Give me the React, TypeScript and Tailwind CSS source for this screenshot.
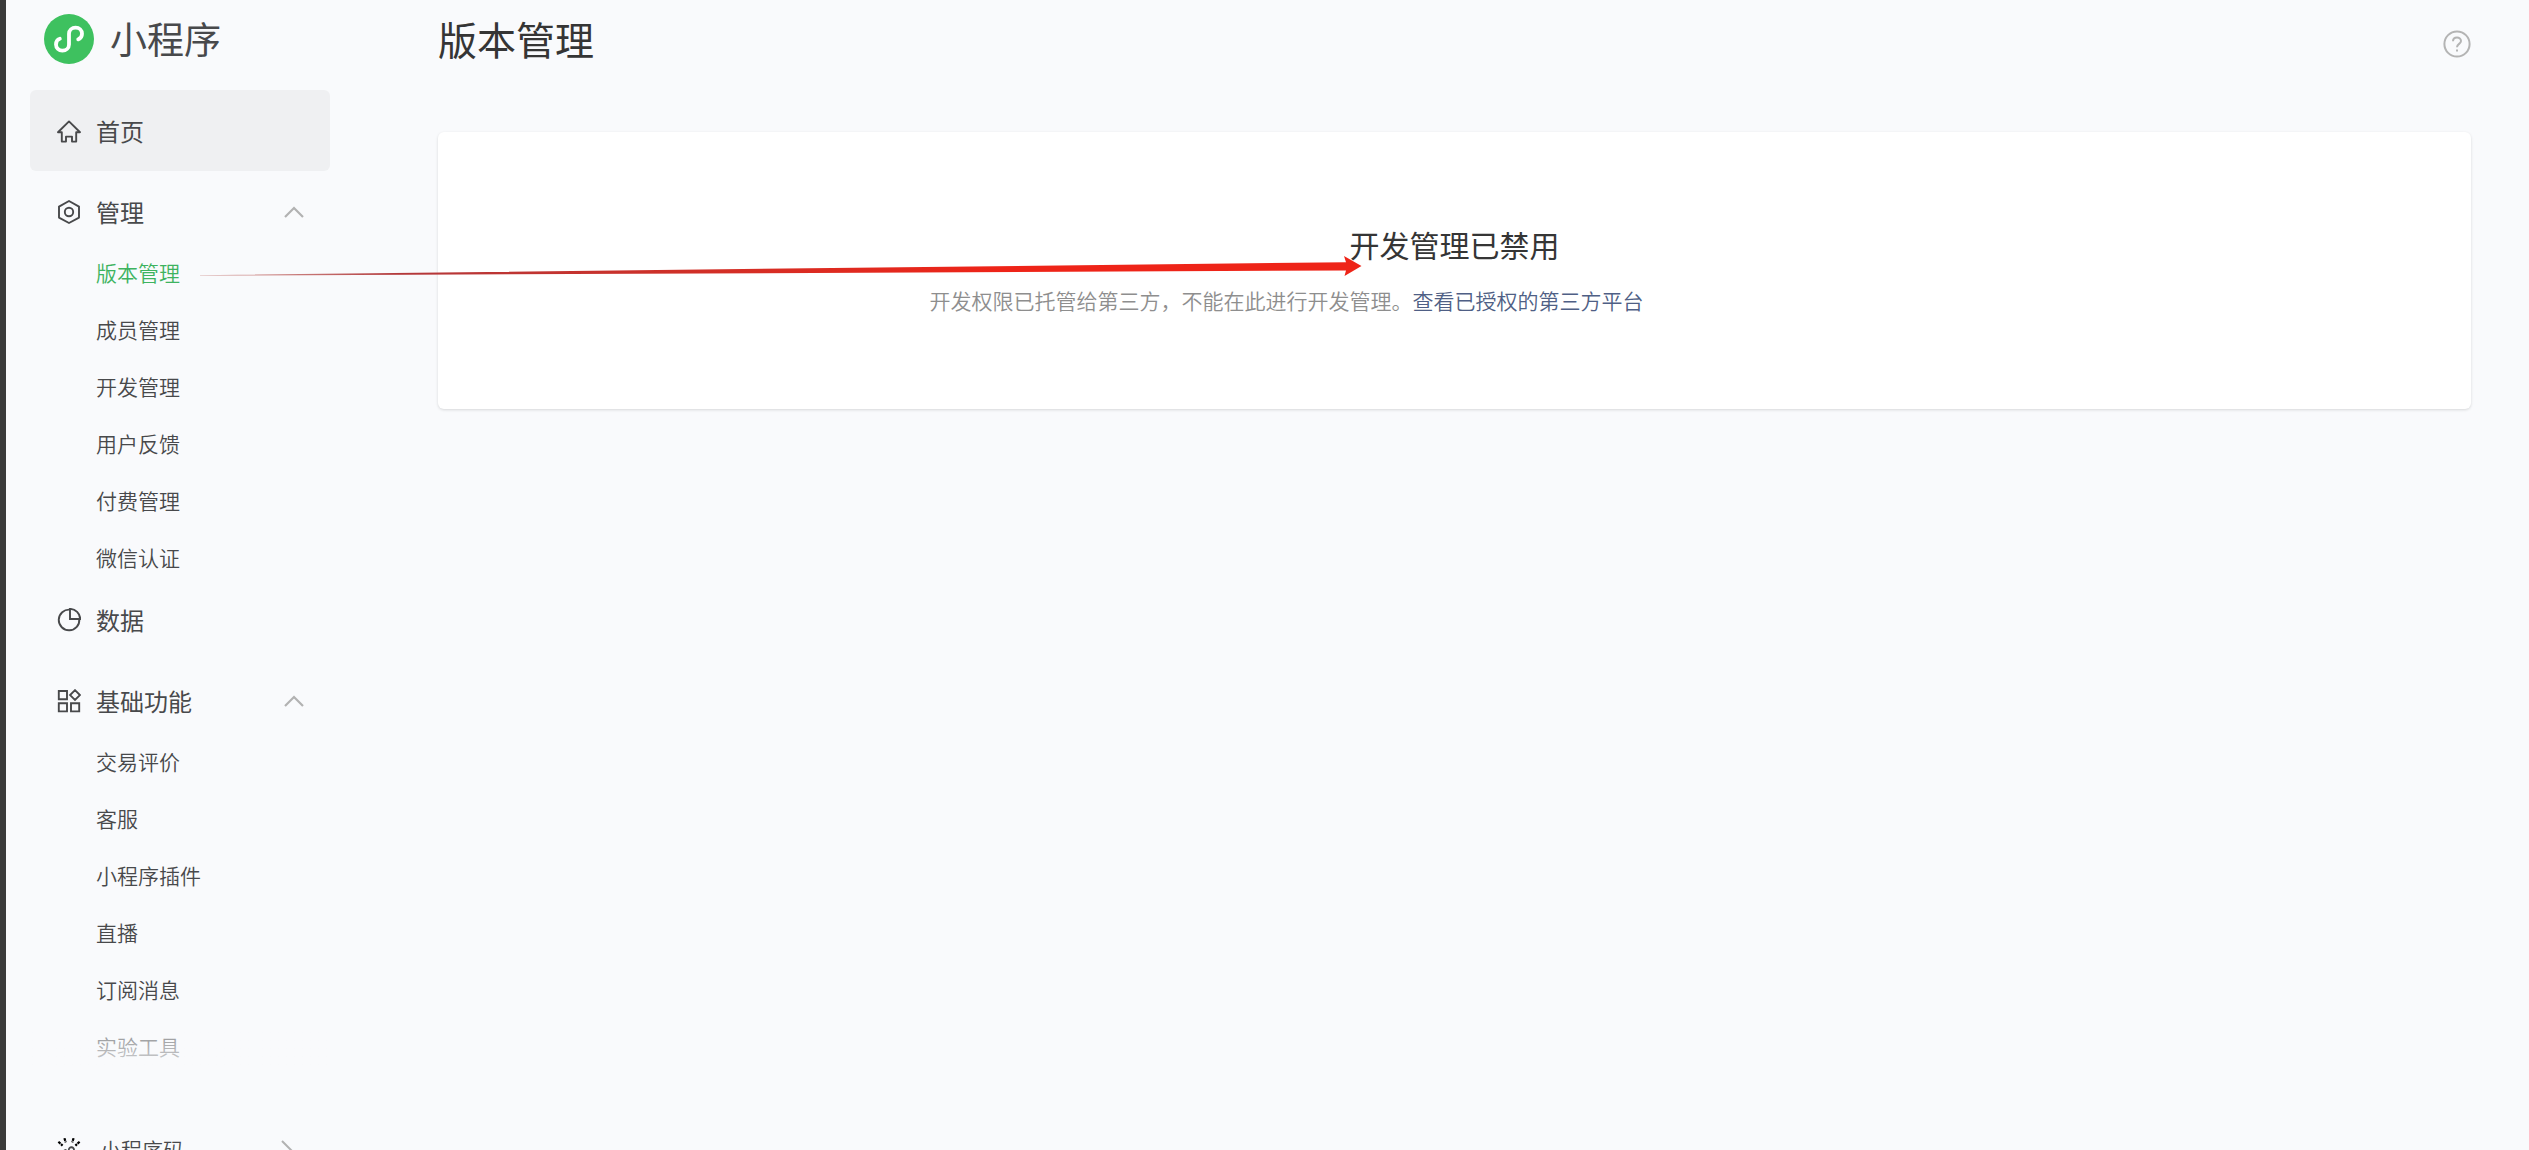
import React, { useState } from 'react';

interface MenuGroup {
  id: string;
  name: string;
  icon: React.ReactNode;
  children?: string[];
}

const iconClass = "w-6 h-6 shrink-0";

const HomeIcon = () => (
  <svg className={iconClass} viewBox="0 0 24 24" fill="none" stroke="currentColor" strokeWidth="1.9" strokeLinejoin="round">
    <path d="M12 2.4L23 13.2H19.2V22.6H15V17.6H9V22.6H4.8V13.2H1L12 2.4z" />
  </svg>
);

const ManageIcon = () => (
  <svg className={iconClass} viewBox="0 0 24 24" fill="none" stroke="currentColor" strokeWidth="1.9" strokeLinejoin="round">
    <path d="M12 1L22 6.6V17.6L12 23L2 17.6V6.6L12 1z" />
    <circle cx="12" cy="12" r="4.2" />
  </svg>
);

const DataIcon = () => (
  <svg className={iconClass} viewBox="0 0 24 24" fill="none" stroke="currentColor" strokeWidth="1.9">
    <path d="M13 1.7A10.3 10.3 0 1 0 22.3 11" />
    <path d="M13 0.9V11H23.2A10.4 10.4 0 0 0 13 0.9z" />
  </svg>
);

const BasicIcon = () => (
  <svg className={iconClass} viewBox="0 0 24 24" fill="none" stroke="currentColor" strokeWidth="1.9">
    <path d="M1.8 2h8.2v8.2H1.8zM1.8 14.2h8.2v8.2H1.8zM14 14.2h8.2v8.2H14zM18 1.2l4.9 4.9L18 11l-4.9-4.9z" />
  </svg>
);

const CodeIcon = () => (
  <svg className={iconClass} viewBox="0 0 24 24" fill="none" stroke="currentColor" strokeWidth="1.8">
    <path
      className="text-black"
      strokeWidth="2.2"
      strokeDasharray="2.8 0.7"
      d="M7.4 0.2L8.8 4.4M16.6 0.2L15.2 4.4M1.4 3.8L5.6 7.6M22.6 3.8L18.4 7.6M0 14H4M24 14H20M1.4 22L5 19M22.6 22L19 19"
    />
    <path d="M14 14.4a2.6 2.6 0 1 0-2.2-2.6v2.6a2.6 2.6 0 1 1-2.4-2.6" />
  </svg>
);

const LogoIcon = () => (
  <svg className="w-[50px] h-[50px] shrink-0" viewBox="0 0 50 50" fill="none">
    <circle cx="25" cy="25" r="25" fill="#3ec15f" />
    <path
      d="M34.2 25.4C36.6 24.6 38 22.4 38 19.8C38 16.2 35.2 13.6 31.6 13.6C28 13.6 25 16.2 25 19.8V30.4C25 34 22 36.6 18.4 36.6C14.8 36.6 12 34 12 30.4C12 27.8 13.4 25.6 15.8 24.8"
      stroke="#fff"
      strokeWidth="3.8"
      strokeLinecap="round"
    />
  </svg>
);

const Chevron = ({ open }: { open: boolean }) => (
  <svg className={open ? "ml-auto w-5 h-3" : "ml-auto w-5 h-3 rotate-180"} viewBox="0 0 20 12" fill="none" stroke="#b2b2b2" strokeWidth="2.2">
    <path d="M1 11L10 2L19 11" />
  </svg>
);

const groups: MenuGroup[] = [
  { id: 'manage', name: '管理', icon: <ManageIcon />, children: ['版本管理', '成员管理', '开发管理', '用户反馈', '付费管理', '微信认证'] },
  { id: 'data', name: '数据', icon: <DataIcon /> },
  { id: 'basic', name: '基础功能', icon: <BasicIcon />, children: ['交易评价', '客服', '小程序插件', '直播', '订阅消息', '实验工具'] },
];

const Sidebar = () => {
  const [active, setActive] = useState('版本管理');
  const [closed, setClosed] = useState<string[]>([]);

  const toggle = (id: string) => {
    setClosed(prev => (prev.includes(id) ? prev.filter(c => c !== id) : [...prev, id]));
  };

  return (
    <aside className="w-[324px] shrink-0 pl-6 text-[#48494b]">
      <div className="flex h-[90px] items-start gap-4 pl-[14px] pt-[14px]">
        <LogoIcon />
        <span className="text-[37px] leading-[48px]">小程序</span>
      </div>

      <nav className="relative text-2xl">
        <a href="#home" className="flex h-[81px] items-center gap-[15px] rounded-md bg-[#eff0f2] pl-[27px] pr-[26px]">
          <HomeIcon />
          首页
        </a>
        {groups.map(group => (
          <div key={group.id}>
            <button type="button" onClick={() => toggle(group.id)} className="flex h-[81px] w-full items-center gap-[15px] pl-[27px] pr-[26px]">
              {group.icon}
              {group.name}
              {group.children && <Chevron open={!closed.includes(group.id)} />}
            </button>
            {group.children && !closed.includes(group.id) && (
              <ul className="space-y-[17px] pb-[2px] pl-[66px] text-[21px] leading-[40px] font-[350]">
                {group.children.map(item => (
                  <li key={item}>
                    <a href="#menu" onClick={() => setActive(item)} className={active === item ? "block text-[#3eb35f]" : "block"}>
                      {item}
                    </a>
                  </li>
                ))}
              </ul>
            )}
          </div>
        ))}
        {/* the list fades out above the footer entry */}
        <div className="pointer-events-none absolute inset-x-0 bottom-0 h-12 bg-gradient-to-b from-[#f9fafc]/30 to-[#f9fafc]/80"></div>
      </nav>

      <a href="#code" className="mt-[60px] flex h-11 items-center gap-[19px] pl-[27px] pr-[37px] text-[21px] font-[350]">
        <CodeIcon />
        小程序码
        <svg className="ml-auto h-5 w-3" viewBox="0 0 12 20" fill="none" stroke="#b2b2b2" strokeWidth="2">
          <path d="M1 1L10 10L1 19" />
        </svg>
      </a>
    </aside>
  );
};

export default function App() {
  return (
    <div className="relative flex h-screen overflow-hidden border-l-[6px] border-[#3a3a3a] bg-[#f9fafc] font-['Noto_Sans_CJK_SC',sans-serif]">
      <Sidebar />

      <main className="flex-1 pl-[108px] pr-[58px]">
        <header className="flex h-[132px] items-start justify-between pt-[10px]">
          <h1 className="text-[39px] leading-[56px] text-[#353535]">版本管理</h1>
          <button type="button" aria-label="帮助" className="mt-5">
            <svg className="h-7 w-7" viewBox="0 0 28 28" fill="none" stroke="#b4b4b4" strokeWidth="2">
              <circle cx="14" cy="14" r="12.6" />
              <path d="M10 11.2C10 8.8 11.8 7.4 14 7.4S18 8.9 18 11C18 13.8 14 14 14 17.2M14 19.4V21.6" />
            </svg>
          </button>
        </header>

        <section className="rounded-md bg-white py-[88px] shadow-[0_1px_3px_rgba(0,0,0,0.14)]">
          <h2 className="text-center text-[30px] leading-[48px] text-[#353535]">开发管理已禁用</h2>
          <p className="mx-auto mt-[11px] max-w-[1050px] text-[21px] leading-[42px] font-[350] text-[#8e8e8e]">
            开发权限已托管给第三方，不能在此进行开发管理。
            <a href="#platform" className="text-[#4f5f85]">查看已授权的第三方平台</a>
          </p>
        </section>
      </main>

      {/* arrow from the menu entry to the notice */}
      <svg className="pointer-events-none absolute left-[194px] top-[250px] h-[30px] w-[1162px]" viewBox="200 250 1162 30">
        <defs>
          <linearGradient id="arrow" gradientUnits="userSpaceOnUse" x1="200" y1="0" x2="1000" y2="0">
            <stop offset="0" stopColor="#b04a44" stopOpacity="0.4" />
            <stop offset="0.25" stopColor="#b3383a" />
            <stop offset="0.6" stopColor="#cf3028" />
            <stop offset="1" stopColor="#ee2418" />
          </linearGradient>
        </defs>
        <path d="M200 275.2L1346 262.2L1344 256L1361.5 266L1344.5 276L1346 270.4L200 275.8z" fill="url(#arrow)" />
      </svg>
    </div>
  );
}
